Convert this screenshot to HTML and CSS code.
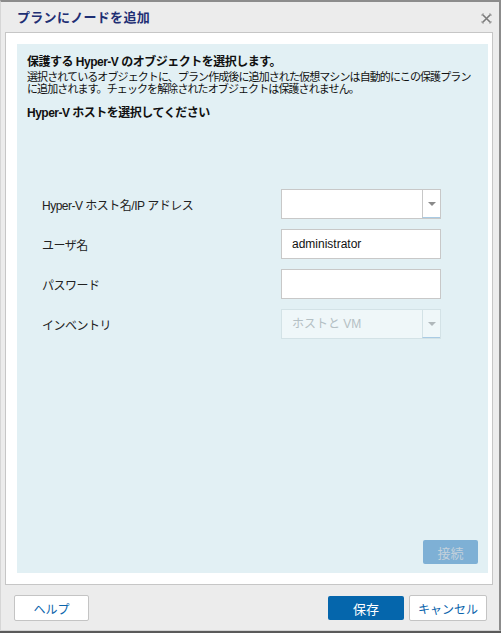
FILE: index.html
```html
<!DOCTYPE html>
<html lang="ja">
<head>
    <meta charset="UTF-8">
    <meta name="viewport" content="width=device-width, initial-scale=1.0">
    <title>プランにノードを追加</title>
    <link rel="stylesheet" href="styles.css">
</head>
<body>
    <div class="dialog">
        <div class="dialog-header">
            <span class="dialog-title">プランにノードを追加</span>
            <span class="close-btn">
                <svg width="11" height="11" viewBox="0 0 11 11">
                    <path d="M1 1 L10 10 M10 1 L1 10" stroke="#7a7a7a" stroke-width="1.6" fill="none"/>
                    <path d="M0.5 2.5 L2.5 0.5 M8.5 0.5 L10.5 2.5 M0.5 8.5 L2.5 10.5 M8.5 10.5 L10.5 8.5" stroke="#9a9a9a" stroke-width="1" fill="none"/>
                </svg>
            </span>
        </div>

        <div class="dialog-content">
            <div class="panel">
                <h2 class="panel-title">保護する Hyper-V のオブジェクトを選択します。</h2>
                <p class="panel-desc">選択されているオブジェクトに、プラン作成後に追加された仮想マシンは自動的にこの保護プラン<br>に追加されます。チェックを解除されたオブジェクトは保護されません。</p>
                <h3 class="panel-subtitle">Hyper-V ホストを選択してください</h3>

                <div class="form">
                    <div class="form-row">
                        <label class="form-label">Hyper-V ホスト名/IP アドレス</label>
                        <div class="combo">
                            <span class="combo-value"></span>
                            <span class="combo-arrow"><span class="tri"></span></span>
                        </div>
                    </div>
                    <div class="form-row">
                        <label class="form-label">ユーザ名</label>
                        <div class="text-input">administrator</div>
                    </div>
                    <div class="form-row">
                        <label class="form-label">パスワード</label>
                        <div class="text-input"></div>
                    </div>
                    <div class="form-row">
                        <label class="form-label">インベントリ</label>
                        <div class="combo disabled">
                            <span class="combo-value">ホストと VM</span>
                            <span class="combo-arrow"><span class="tri"></span></span>
                        </div>
                    </div>
                </div>

                <button class="connect-btn">接続</button>
            </div>
        </div>

        <div class="dialog-footer">
            <button class="btn btn-light">ヘルプ</button>
            <div class="footer-right">
                <button class="btn btn-primary">保存</button>
                <button class="btn btn-light btn-cancel">キャンセル</button>
            </div>
        </div>
    </div>
</body>
</html>
```

FILE: styles.css
```css
* {
    box-sizing: border-box;
}
html, body {
    margin: 0;
    padding: 0;
    background-color: #5a5a5a;
}
body {
    font-family: "Liberation Sans", "Noto Sans CJK JP", sans-serif;
    font-size: 12px;
    color: #222;
}
.dialog {
    width: 501px;
    height: 631px;
    background-color: #ececec;
    border-top: 2px solid #8c8c8c;
    border-right: 2px solid #8c8c8c;
    border-left: 1px solid #d6d6d6;
    border-bottom: 1px solid #d2d2d2;
    display: flex;
    flex-direction: column;
}
.dialog-header {
    height: 30px;
    display: flex;
    align-items: center;
    justify-content: space-between;
    padding: 0 7px 0 16px;
}
.dialog-title {
    font-size: 13px;
    font-weight: bold;
    color: #1f2f74;
    letter-spacing: 0.3px;
    margin-top: -2px;
}
.close-btn {
    display: flex;
    margin-top: 2px;
}
.dialog-content {
    margin: 0 6px 0 4px;
    height: 553px;
    background-color: #fff;
    border: 1px solid #c6c6c6;
    padding: 11px 4px 11px 11px;
}
.panel {
    height: 529px;
    background-color: #e2f0f4;
    padding: 10px 10px 9px 10px;
    display: flex;
    flex-direction: column;
}
.panel-title {
    margin: 0;
    font-size: 12px;
    line-height: 16px;
    font-weight: bold;
    letter-spacing: -0.5px;
    color: #111;
}
.panel-desc {
    margin: 1px 0 0 0;
    font-size: 11px;
    line-height: 12px;
    letter-spacing: -0.9px;
    color: #111;
    white-space: nowrap;
}
.panel-subtitle {
    margin: 10px 0 0 0;
    font-size: 12px;
    line-height: 16px;
    font-weight: bold;
    letter-spacing: -0.5px;
    color: #111;
}
.form {
    margin-top: 68px;
    padding-left: 15px;
    display: flex;
    flex-direction: column;
    gap: 10px;
}
.form-row {
    display: flex;
    align-items: center;
    height: 30px;
}
.form-label {
    width: 239px;
    font-size: 12px;
    letter-spacing: -0.5px;
    color: #222;
}
.text-input, .combo {
    width: 160px;
    height: 30px;
    background-color: #fff;
    border: 1px solid #c8c8c8;
}
.text-input {
    padding: 0 10px;
    line-height: 28px;
    font-size: 12px;
    color: #111;
}
.combo {
    display: flex;
}
.combo-value {
    flex: 1;
    padding: 0 10px;
    line-height: 28px;
    font-size: 12px;
}
.combo-arrow {
    width: 18px;
    border-left: 1px solid #c8c8c8;
    border-bottom: 1px solid #a9cbe4;
    display: flex;
    align-items: center;
    justify-content: center;
}
.tri {
    width: 0;
    height: 0;
    border-left: 4px solid transparent;
    border-right: 4px solid transparent;
    border-top: 4px solid #8a8a8a;
}
.combo.disabled {
    background-color: #eff7f9;
    border-color: #d3e2e6;
}
.combo.disabled .combo-value {
    color: #b4c0c4;
}
.combo.disabled .combo-arrow {
    border-left-color: #d3e2e6;
}
.combo.disabled .tri {
    border-top-color: #b0b8bb;
}
.connect-btn {
    margin-top: auto;
    align-self: flex-end;
    width: 55px;
    height: 24px;
    border: none;
    border-radius: 2px;
    background-color: #7eb0d5;
    color: #c3d1dc;
    font-family: inherit;
    font-size: 13px;
    padding: 0;
}
.dialog-footer {
    flex: 1;
    display: flex;
    justify-content: space-between;
    align-items: flex-start;
    padding: 10px 12px 0 13px;
}
.footer-right {
    display: flex;
    gap: 5px;
    align-items: center;
}
.btn {
    font-family: inherit;
    font-size: 12px;
    padding: 0;
    border-radius: 2px;
}
.btn-light {
    width: 75px;
    height: 26px;
    background-color: #fff;
    border: 1px solid #c4c4c4;
    color: #0a64ac;
}
.btn-cancel {
    width: 78px;
}
.btn-primary {
    width: 76px;
    height: 24px;
    border: none;
    background-color: #0566ac;
    color: #fff;
    font-size: 13px;
}
```
